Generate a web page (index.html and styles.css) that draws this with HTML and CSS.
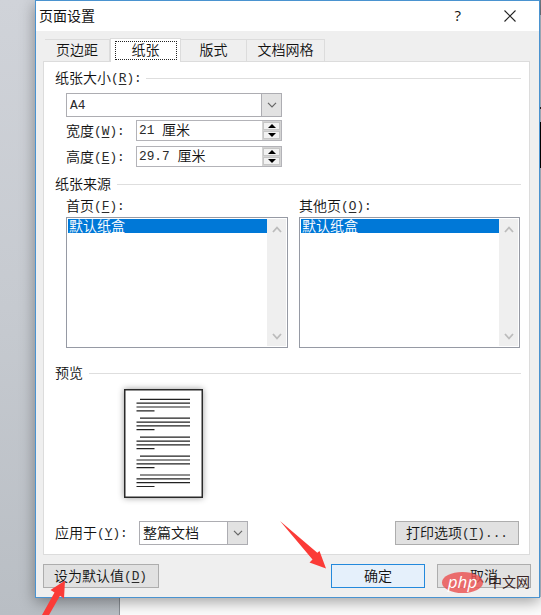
FILE: index.html
```html
<!DOCTYPE html>
<html lang="zh-CN">
<head>
<meta charset="utf-8">
<title>页面设置</title>
<link rel="stylesheet" href="styles.css">
</head>
<body>
<div class="desktop">
  <div class="sheet"></div>
  <div class="edge"></div>
  <main class="dialog">
    <header class="titlebar">
      <h1>页面设置</h1>
      <span class="help">?</span>
      <svg class="close" width="12" height="12" viewBox="0 0 12 12"><path d="M.5 .5l11 11M11.500 .5l-11 11" /></svg>
    </header>
    <nav class="tabs">
      <div class="tab t1">页边距</div>
      <div class="tab active"><span>纸张</span></div>
      <div class="tab t3">版式</div>
      <div class="tab t4">文档网格</div>
    </nav>
    <section class="panel">
      <div class="group g1"><span>纸张大小<i>(<u>R</u>):</i></span></div>
      <div class="combo size"><span><i>A4</i></span><b><svg width="10" height="6" viewBox="0 0 10 6"><path d="M1 .8l4 4 4-4"/></svg></b></div>
      <div class="field f1"><label>宽度<i>(<u>W</u>):</i></label>
        <div class="spin"><span><i>21 </i>厘米</span><div class="steps"><b><svg width="8" height="4" viewBox="0 0 8 4"><path d="M0 4l4-4 4 4z"/></svg></b><b><svg width="8" height="4" viewBox="0 0 8 4"><path d="M0 0l4 4 4-4z"/></svg></b></div></div>
      </div>
      <div class="field f2"><label>高度<i>(<u>E</u>):</i></label>
        <div class="spin"><span><i>29.7 </i>厘米</span><div class="steps"><b><svg width="8" height="4" viewBox="0 0 8 4"><path d="M0 4l4-4 4 4z"/></svg></b><b><svg width="8" height="4" viewBox="0 0 8 4"><path d="M0 0l4 4 4-4z"/></svg></b></div></div>
      </div>
      <div class="group g2"><span>纸张来源</span></div>
      <div class="sources">
        <div class="source"><label>首页<i>(<u>F</u>):</i></label>
          <div class="list"><div class="items"><div class="item">默认纸盒</div></div><div class="scroll"><svg width="10" height="7" viewBox="0 0 10 7"><path d="M1 6l4-4.500 4 4.500"/></svg><svg width="10" height="7" viewBox="0 0 10 7"><path d="M1 1l4 4.500 4-4.500"/></svg></div></div>
        </div>
        <div class="source"><label>其他页<i>(<u>O</u>):</i></label>
          <div class="list"><div class="items"><div class="item">默认纸盒</div></div><div class="scroll"><svg width="10" height="7" viewBox="0 0 10 7"><path d="M1 6l4-4.500 4 4.500"/></svg><svg width="10" height="7" viewBox="0 0 10 7"><path d="M1 1l4 4.500 4-4.500"/></svg></div></div>
        </div>
      </div>
      <div class="group g3"><span>预览</span></div>
      <svg class="page" width="79" height="109" viewBox="0 0 79 109">
        <defs><g id="block"><path d="M16 0H66M12.500 3.900H66M12.500 7.700H66M12.500 11.500H30.500"/></g></defs>
        <rect x=".75" y=".75" width="77.500" height="107.500"/>
        <use href="#block" y="10.300"/><use href="#block" y="29.200"/><use href="#block" y="48.200"/><use href="#block" y="67.100"/><use href="#block" y="86"/>
      </svg>
      <div class="apply"><label>应用于<i>(<u>Y</u>):</i></label>
        <div class="combo scope"><span>整篇文档</span><b><svg width="10" height="6" viewBox="0 0 10 6"><path d="M1 .8l4 4 4-4"/></svg></b></div>
        <button class="print"><span>打印选项<i>(<u>T</u>)...</i></span></button>
      </div>
    </section>
    <footer class="actions">
      <button class="default"><span>设为默认值<i>(<u>D</u>)</i></span></button>
      <button class="ok">确定</button>
      <button class="cancel">取消</button>
    </footer>
  </main>
  <svg class="arrow a1" width="48" height="50" viewBox="0 0 48 50"><path d="M0 0L37.300 31.800 39.500 30 46 47.500 29.500 41.500 32.500 38.500z"/></svg>
  <svg class="arrow a2" width="26" height="36" viewBox="0 0 26 36"><path d="M23 1.500L22 19.500 18 16.800 7 36H0L12.500 13.500 8.500 11z"/></svg>
  <div class="mark"><span class="php">php</span><span class="cn">中文网</span></div>
</div>
</body>
</html>
```
FILE: styles.css
```css
* { box-sizing: border-box; }
body {
  margin: 0;
  font: 14px/18px "Noto Sans CJK SC", sans-serif;
  font-weight: 350;
  color: #111;
}
i {
  font: 12.8px/14px "Liberation Mono", monospace;
  white-space: pre;
  vertical-align: 1px;
  color: #2a2a2a;
}
u { text-underline-offset: 2px; }
svg { display: block; flex: none; }
label, span { white-space: nowrap; }

.desktop {
  position: relative;
  width: 541px;
  height: 615px;
  overflow: hidden;
  padding-left: 35px;
  background: linear-gradient(#d0d3d9, #c6cad0 50%, #b9bec4);
}
.sheet {
  position: absolute;
  left: 119px;
  top: 580px;
  width: 422px;
  height: 35px;
  background: #fcfcfc;
  border-left: 1px solid #888d93;
}
.edge {
  position: absolute;
  left: 540px;
  top: 0;
  width: 1px;
  height: 597px;
  background: linear-gradient(#737b85 15px, #b8c7d5 15px 107px, #222 107px 109px, #b8c7d5 109px 122px, #000 122px 168px, #b8c7d5 168px);
}
.dialog {
  position: relative;
  width: 505px;
  height: 598px;
  background: #efefef;
  border: 1px solid #4a93d0;
  box-shadow: 0 4px 14px rgba(0, 0, 0, .36);
}
.titlebar {
  display: flex;
  align-items: center;
  height: 30px;
  padding: 0 23px 0 3px;
  background: #fff;
}
h1 { margin: 0; padding-bottom: 3px; font-size: 14px; line-height: 18px; font-weight: 400; }
.help { margin-left: auto; margin-right: 43px; padding-bottom: 2px; font: 15px "Open Sans", sans-serif; }
.close { fill: none; stroke: #222; stroke-width: 1.1; }

.tabs {
  display: flex;
  align-items: flex-end;
  height: 30px;
  padding-left: 9px;
}
.tab {
  display: flex;
  align-items: center;
  justify-content: center;
  height: 22px;
  padding-bottom: 3px;
  border: 1px solid #dcdcdc;
  border-width: 1px 1px 0 0;
}
.t1 { width: 65px; }
.t3 { width: 66px; }
.t4 { width: 78px; }
.tab.active {
  width: 71px;
  height: 24px;
  margin-bottom: -1px;
  padding-bottom: 0;
  background: #fff;
  border-left-width: 1px;
  position: relative;
  z-index: 1;
}
.active span {
  width: 62px;
  height: 19px;
  border: 1px dotted #222;
  text-align: center;
  line-height: 14px;
}

.panel {
  width: 487px;
  height: 494px;
  margin-left: 7px;
  padding: 7px 8px 0 11px;
  background: #fff;
  border: 1px solid #dcdcdc;
}
.group { display: flex; align-items: center; height: 18px; }
.group span { padding-bottom: 2px; }
.group::after { content: ""; flex: 1; height: 1px; background: #dedede; }
.g1::after { margin-left: 4px; }
.g2::after, .g3::after { margin-left: 6px; }

.combo {
  display: flex;
  align-items: center;
  height: 24px;
  border: 1px solid #adadb2;
  background: #fff;
}
.combo span { flex: 1; padding: 0 0 2px 3px; }
.combo b {
  display: flex;
  align-items: center;
  justify-content: center;
  width: 20px;
  height: 22px;
  border-left: 1px solid #adadb2;
  background: #e2e2e2;
}
.combo svg { fill: none; stroke: #666; stroke-width: 1.2; }
.size { width: 216px; margin: 6px 0 0 11px; }

.field {
  display: flex;
  align-items: center;
  width: 216px;
  height: 21px;
  margin-left: 11px;
}
.f1 { margin-top: 3px; }
.f2 { margin-top: 5px; }
.field label { width: 70px; padding-bottom: 1px; }
.spin {
  display: flex;
  align-items: center;
  width: 146px;
  height: 21px;
  border: 1px solid #b3b3b8;
}
.spin span { flex: 1; padding: 0 0 3px 2px; }
.steps { width: 19px; height: 19px; padding: 1px; background: #d4d4d4; display: grid; gap: 1px; }
.steps b {
  display: flex;
  align-items: center;
  justify-content: center;
  background: #f2f2f2;
  border: 1px solid #c6c6c6;
}
.steps svg { fill: #000; }

.g2 { margin-top: 8px; }
.sources { display: flex; gap: 11px; margin: 3px 0 0 11px; }
.source { width: 222px; }
.source + .source { width: 221px; }
.source label { display: block; height: 21px; }
.list {
  display: flex;
  height: 131px;
  padding: 1px;
  border: 1px solid #969aa4;
}
.items { flex: 1; }
.item {
  height: 14px;
  padding-left: 1px;
  line-height: 12px;
  color: #fff;
  background: #0078d7;
}
.scroll {
  display: flex;
  flex-direction: column;
  align-items: center;
  justify-content: space-between;
  width: 19px;
  padding: 7px 0 6px;
  background: #efefef;
}
.scroll svg { fill: none; stroke: #bcbcbc; stroke-width: 1.8; }

.g3 { margin-top: 16px; }
.page { margin: 7px 0 0 69px; filter: drop-shadow(0 0 3px rgba(0, 0, 0, .4)); }
.page rect { fill: #fff; stroke: #2a2a2a; stroke-width: 1.5; }
.page path { stroke: #222; stroke-width: 1.2; }

.apply { display: flex; align-items: center; height: 24px; margin-top: 23px; }
.apply label { width: 84px; padding-bottom: 2px; }
.scope { width: 109px; }
button {
  display: flex;
  align-items: center;
  justify-content: center;
  height: 24px;
  padding: 0 0 2px;
  font: inherit;
  color: inherit;
  white-space: nowrap;
  background: #e1e1e1;
  border: 1px solid #adadad;
}
.print { width: 124px; margin: 0 2px 0 auto; }
.actions { display: flex; align-items: center; height: 24px; margin: 9px 8px 0 7px; }
.default { width: 116px; padding-right: 1px; }
.ok { width: 94px; margin-left: auto; background: #e5f0fb; border-color: #2389dc; }
.cancel { width: 94px; margin-left: 12px; }

.arrow { position: absolute; fill: #fb3b37; }
.a1 { left: 280px; top: 521px; }
.a2 { left: 42px; top: 579px; }
.mark {
  position: absolute;
  left: 442px;
  top: 572px;
  display: flex;
  align-items: center;
  height: 21px;
}
.php {
  width: 41px;
  height: 21px;
  border-radius: 50%;
  background: rgba(236, 82, 82, .82);
  color: #fff;
  font: italic 17px/19px "Open Sans", sans-serif;
  text-align: center;
}
.cn { margin-left: 5px; padding-bottom: 3px; font-size: 14px; font-weight: 400; color: #3a2525; }
```
